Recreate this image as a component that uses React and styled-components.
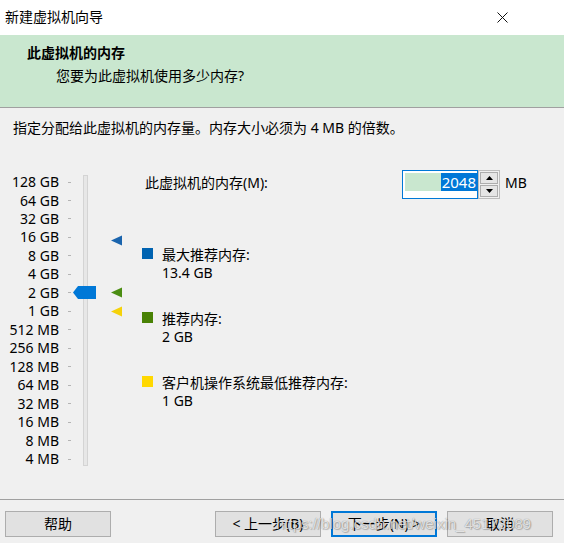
import React from "react";
import styled, { createGlobalStyle } from "styled-components";

const Global = createGlobalStyle`
  html, body { margin: 0; padding: 0; background: #f0f0f0; }
  * { box-sizing: border-box; }
`;

const FONT = `"Noto Sans", "Noto Sans CJK SC", sans-serif`;

const Window = styled.div`
  width: 564px;
  height: 543px;
  display: flex;
  flex-direction: column;
  background: #f0f0f0;
  font-family: ${FONT};
  font-size: 14px;
  color: #000;
  overflow: hidden;
`;

const TitleBar = styled.div`
  height: 35px;
  flex: none;
  background: #fff;
  display: flex;
  align-items: center;
  padding: 0 56px 0 5px;
  justify-content: space-between;
`;

const TitleText = styled.span`
  font-size: 14px;
  line-height: 18px;
  margin-top: -2px;
`;

const Header = styled.div`
  height: 73px;
  flex: none;
  background: #c9e7cf;
  border-bottom: 1px solid #a0a0a0;
  padding-top: 8px;
`;

const HeaderTitle = styled.div`
  font-weight: bold;
  line-height: 20px;
  padding-left: 27px;
`;

const HeaderSub = styled.div`
  line-height: 20px;
  margin-top: 3px;
  padding-left: 56px;
`;

const Body = styled.div`
  flex: 1;
  display: flex;
  flex-direction: column;
  padding-top: 10px;
`;

const Instruction = styled.div`
  line-height: 20px;
  padding-left: 13px;
`;

const Main = styled.div`
  display: flex;
  margin-top: 32px;
`;

const Scale = styled.div`
  position: relative;
  display: flex;
  width: 142px;
  flex: none;
`;

const Labels = styled.div`
  display: grid;
  grid-auto-rows: 18.47px;
  padding-top: 2.8px;
`;

const LabelRow = styled.div`
  display: flex;
  align-items: center;
`;

const LabelText = styled.span`
  width: 59px;
  text-align: right;
  line-height: 18px;
  white-space: nowrap;
`;

const Tick = styled.span`
  margin-left: 9px;
  width: 3px;
  height: 1px;
  background: #b4b4b4;
`;

const Track = styled.div`
  margin-left: 12px;
  margin-top: 5px;
  width: 5px;
  height: 291px;
  background: #e7e7e7;
  border: 1px solid #d4d4d4;
`;

const Thumb = styled.svg`
  position: absolute;
  left: 73px;
  width: 23px;
  height: 13px;
`;

const Marker = styled.svg`
  position: absolute;
  left: 111px;
  width: 11px;
  height: 11px;
`;

const RightCol = styled.div`
  display: flex;
  flex-direction: column;
`;

const MemRow = styled.div`
  display: flex;
  align-items: center;
  height: 29px;
`;

const MemLabel = styled.span`
  width: 260px;
  padding-left: 3px;
  line-height: 18px;
  margin-top: -3px;
`;

const InputBox = styled.div`
  width: 76px;
  height: 29px;
  border: 1px solid #0078d7;
  background: #fff;
  padding: 2px 0 0 2px;
`;

const Field = styled.div`
  height: 18px;
  background: #c9e7cf;
  display: flex;
  justify-content: flex-end;
`;

const Selected = styled.span`
  background: #0078d7;
  color: #fff;
  line-height: 18px;
  padding: 0 1px 0 1px;
  font-size: 15px;
`;

const Spinner = styled.div`
  width: 22px;
  height: 29px;
  border: 1px solid #bdbdbd;
  display: flex;
  flex-direction: column;
  gap: 1px;
  padding: 1px;
`;

const SpinBtn = styled.div`
  flex: 1;
  border: 1px solid #adadad;
  background: #e5e5e5;
  display: flex;
  align-items: center;
  justify-content: center;
`;

const Unit = styled.span`
  margin-left: 5px;
  line-height: 18px;
  margin-top: -3px;
`;

const Legend = styled.div`
  display: flex;
  flex-direction: column;
  gap: 28px;
  margin-top: 47px;
`;

const LegendItem = styled.div`
  display: grid;
  grid-template-columns: 20px auto;
  line-height: 18px;
`;

const Square = styled.span`
  width: 11px;
  height: 11px;
  margin-top: 2px;
  background: ${(p) => p.$color};
`;

const Footer = styled.div`
  position: relative;
  height: 44px;
  flex: none;
  border-top: 1px solid #a0a0a0;
  display: flex;
  align-items: flex-start;
  padding: 11px 11px 0 5px;
`;

const Button = styled.div`
  width: 106px;
  height: 26px;
  background: #e1e1e1;
  border: ${(p) => (p.$primary ? "2px solid #0078d7" : "1px solid #adadad")};
  display: flex;
  align-items: center;
  justify-content: center;
  line-height: 18px;
  margin-left: ${(p) => p.$gap || 0}px;
  white-space: nowrap;
`;

const Watermark = styled.span`
  position: absolute;
  left: 276px;
  top: 14px;
  font-family: "Liberation Sans", sans-serif;
  font-size: 15px;
  line-height: 20px;
  color: rgba(255, 255, 255, 0.75);
  text-shadow: 0 0 1px rgba(0, 0, 0, 0.45), 1px 1px 1px rgba(0, 0, 0, 0.2);
  pointer-events: none;
  white-space: nowrap;
`;

const labels = [
  "128 GB", "64 GB", "32 GB", "16 GB", "8 GB", "4 GB", "2 GB", "1 GB",
  "512 MB", "256 MB", "128 MB", "64 MB", "32 MB", "16 MB", "8 MB", "4 MB",
];

const ROW = 18.47;
const FIRST = 2.8;
const centerFor = (gb) => FIRST + (Math.log2(128 / gb) + 0.5) * ROW;

const markers = [
  { gb: 13.4, color: "#1a64ad", dy: -2 },
  { gb: 2, color: "#4b8d12", dy: 0 },
  { gb: 1, color: "#f5d20a", dy: 0 },
];

const legend = [
  { color: "#0063b1", title: "最大推荐内存:", value: "13.4 GB" },
  { color: "#498205", title: "推荐内存:", value: "2 GB" },
  { color: "#ffd800", title: "客户机操作系统最低推荐内存:", value: "1 GB" },
];

export default function App() {
  return (
    <>
      <Global />
      <Window>
        <TitleBar>
          <TitleText>新建虚拟机向导</TitleText>
          <svg width="11" height="11" viewBox="0 0 11 11">
            <path d="M0.5 0.5 L10.5 10.5 M10.5 0.5 L0.5 10.5" stroke="#111" strokeWidth="1" />
          </svg>
        </TitleBar>
        <Header>
          <HeaderTitle>此虚拟机的内存</HeaderTitle>
          <HeaderSub>您要为此虚拟机使用多少内存?</HeaderSub>
        </Header>
        <Body>
          <Instruction>指定分配给此虚拟机的内存量。内存大小必须为 4 MB 的倍数。</Instruction>
          <Main>
            <Scale>
              <Labels>
                {labels.map((l) => (
                  <LabelRow key={l}>
                    <LabelText>{l}</LabelText>
                    <Tick />
                  </LabelRow>
                ))}
              </Labels>
              <Track />
              <Thumb viewBox="0 0 23 13" style={{ top: centerFor(2) - 6.5 }}>
                <polygon points="0,6.5 5,0 23,0 23,13 5,13" fill="#0078d7" />
              </Thumb>
              {markers.map((m) => (
                <Marker
                  key={m.gb}
                  viewBox="0 0 11 11"
                  style={{ top: centerFor(m.gb) - 5.5 + m.dy }}
                >
                  <polygon points="0,5.5 11,0.5 11,10.5" fill={m.color} />
                </Marker>
              ))}
            </Scale>
            <RightCol>
              <MemRow>
                <MemLabel>此虚拟机的内存(M):</MemLabel>
                <InputBox>
                  <Field>
                    <Selected>2048</Selected>
                  </Field>
                </InputBox>
                <Spinner>
                  <SpinBtn>
                    <svg width="7" height="4" viewBox="0 0 7 4">
                      <polygon points="0,4 3.5,0 7,4" fill="#000" />
                    </svg>
                  </SpinBtn>
                  <SpinBtn>
                    <svg width="7" height="4" viewBox="0 0 7 4">
                      <polygon points="0,0 7,0 3.5,4" fill="#000" />
                    </svg>
                  </SpinBtn>
                </Spinner>
                <Unit>MB</Unit>
              </MemRow>
              <Legend>
                {legend.map((item) => (
                  <LegendItem key={item.title}>
                    <Square $color={item.color} />
                    <span>{item.title}</span>
                    <span />
                    <span>{item.value}</span>
                  </LegendItem>
                ))}
              </Legend>
            </RightCol>
          </Main>
        </Body>
        <Footer>
          <Button>帮助</Button>
          <Button $gap={104}>&lt; 上一步(B)</Button>
          <Button $gap={10} $primary>下一步(N) &gt;</Button>
          <Button $gap={10}>取消</Button>
          <Watermark>https://blog.csdn.net/weixin_45173089</Watermark>
        </Footer>
      </Window>
    </>
  );
}
